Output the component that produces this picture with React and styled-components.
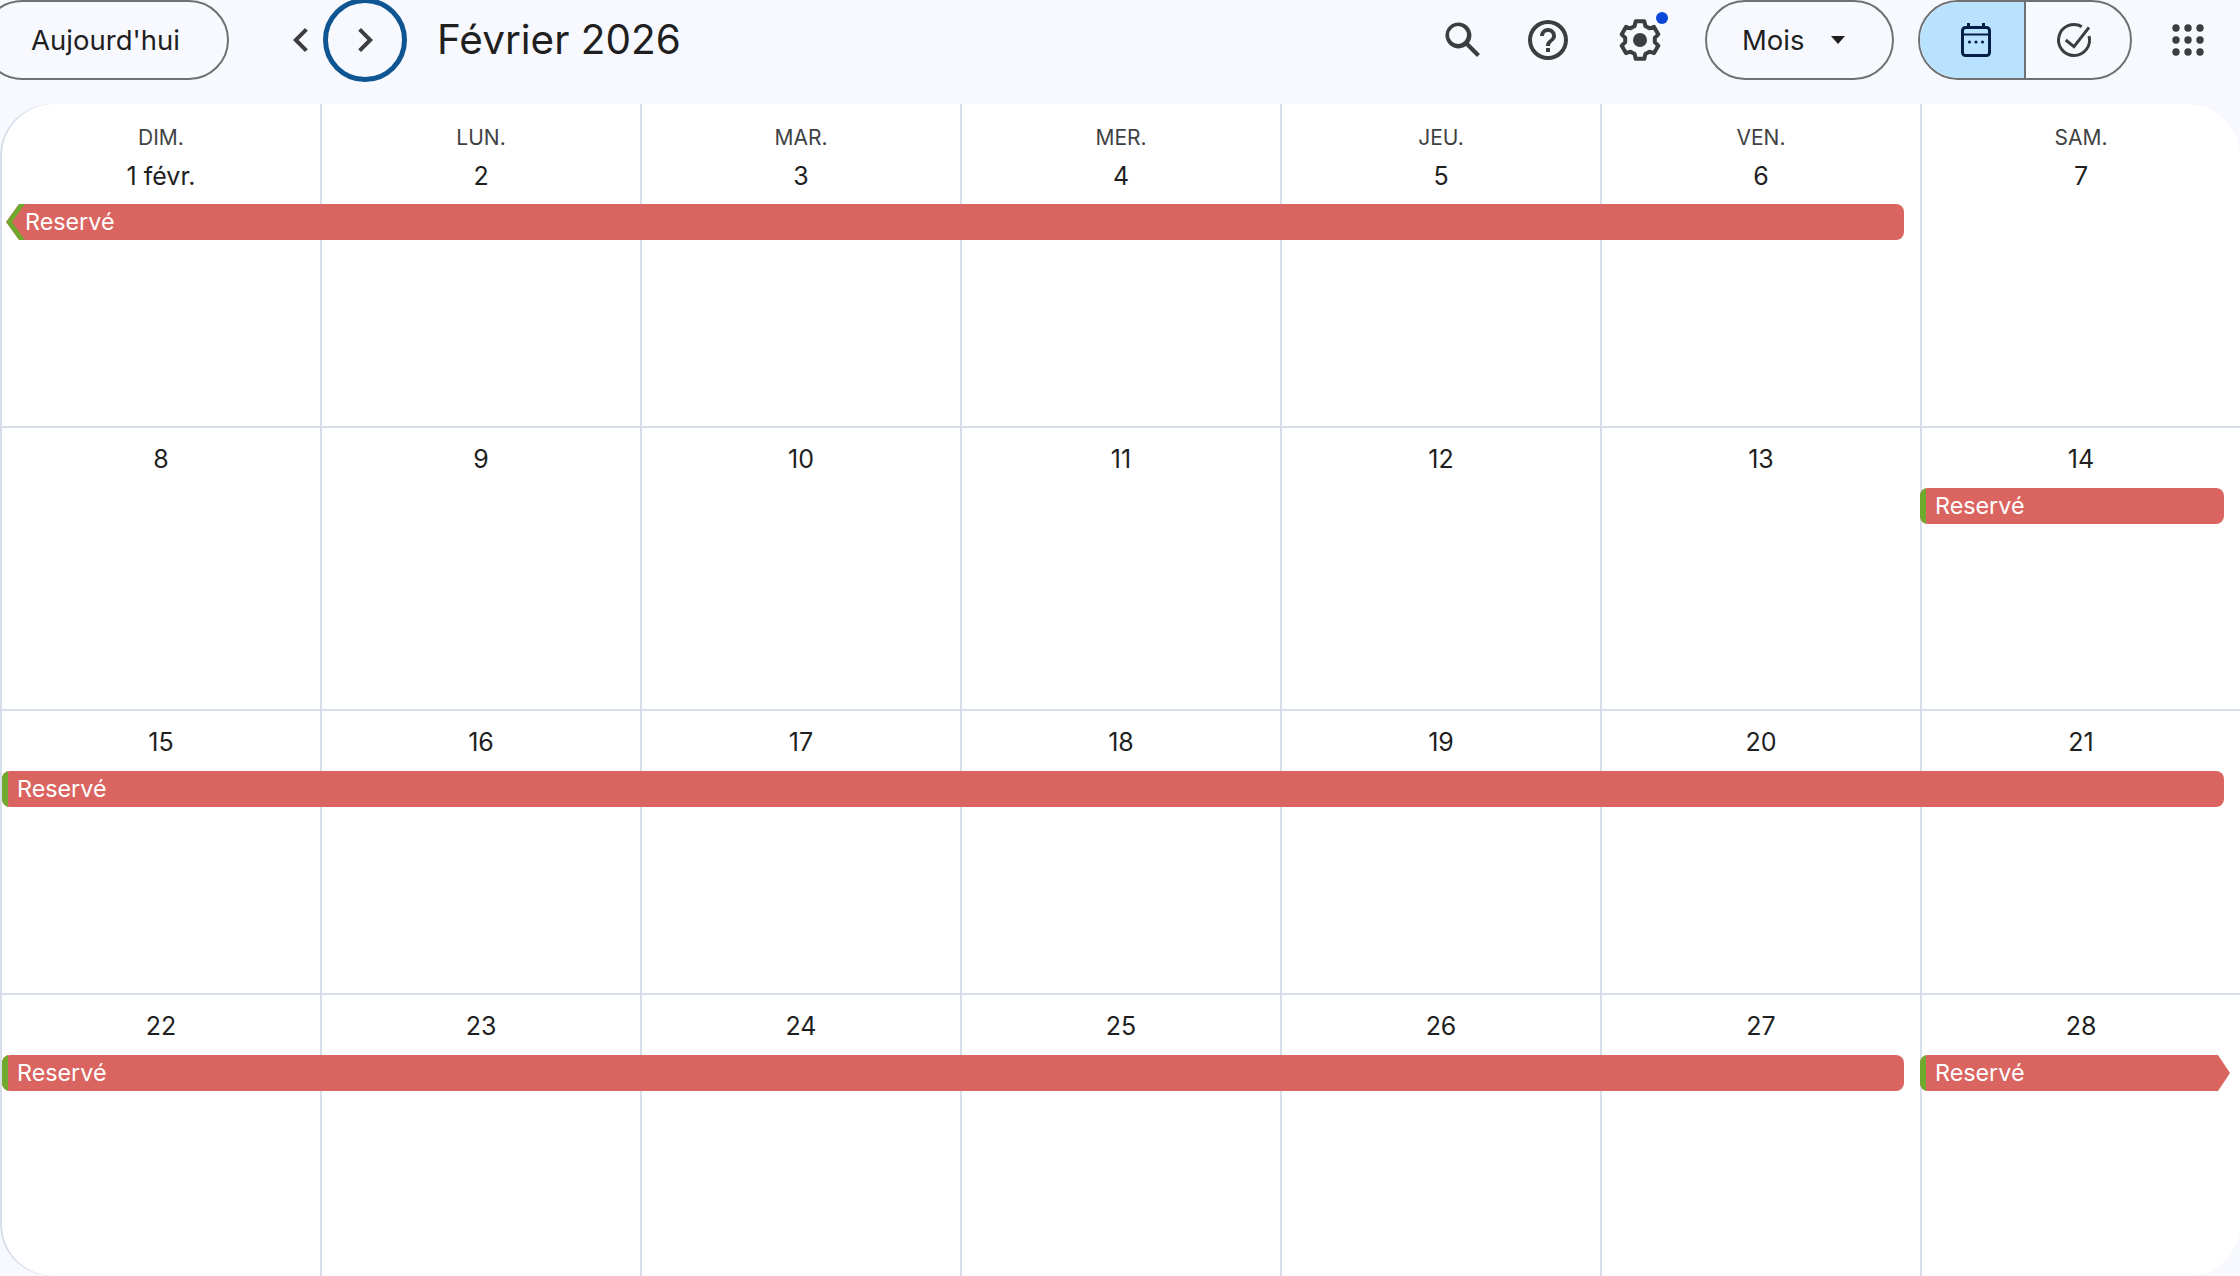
import React from "react";
import styled, { createGlobalStyle } from "styled-components";

const GlobalStyle = createGlobalStyle`
  html, body {
    margin: 0;
    padding: 0;
    background: #f7f9fe;
    overflow: hidden;
  }
  * {
    box-sizing: border-box;
  }
`;

const Page = styled.div`
  width: 2240px;
  height: 1276px;
  display: flex;
  flex-direction: column;
  overflow: hidden;
  font-family: Inter, "Liberation Sans", sans-serif;
  color: #1f1f1f;
`;

const Toolbar = styled.div`
  height: 104px;
  flex: none;
  display: flex;
  align-items: flex-start;
  padding-right: 28px;
`;

const Pill = styled.button`
  height: 80px;
  margin-left: ${(p) => p.$left || 0}px;
  width: ${(p) => p.$width}px;
  flex: none;
  border: 2px solid #6f7170;
  border-radius: 40px;
  background: transparent;
  font: inherit;
  font-size: 27.5px;
  color: #1f1f1f;
  display: flex;
  align-items: center;
  justify-content: ${(p) => p.$justify || "center"};
  padding: 0 0 0 ${(p) => p.$pad || 0}px;
`;

const Caret = styled.span`
  width: 0;
  height: 0;
  margin-left: 26px;
  border-left: 7px solid transparent;
  border-right: 7px solid transparent;
  border-top: 8px solid #1f1f1f;
`;

const NavIcon = styled.div`
  flex: none;
  width: ${(p) => p.$size || 48}px;
  height: ${(p) => p.$size || 48}px;
  margin-left: ${(p) => p.$left || 0}px;
  margin-top: ${(p) => 40 - (p.$size || 48) / 2}px;
  display: flex;
  align-items: center;
  justify-content: center;
  position: relative;
  border-radius: 50%;
  border: ${(p) => (p.$focus ? "5px solid #0f5592" : "none")};
`;

const Dot = styled.span`
  position: absolute;
  top: -4px;
  right: -4px;
  width: 12px;
  height: 12px;
  border-radius: 50%;
  background: #0b48d8;
`;

const Title = styled.div`
  margin: 13px 0 0 30px;
  width: 500px;
  flex: none;
  font-size: 40.5px;
  line-height: 54px;
  color: #1f1f1f;
`;

const Spacer = styled.div`
  flex: 1;
`;

const Toggle = styled.div`
  width: 214px;
  height: 80px;
  margin-left: 24px;
  flex: none;
  display: flex;
  border: 2px solid #6f7170;
  border-radius: 40px;
  overflow: hidden;
`;

const ToggleSide = styled.div`
  flex: none;
  width: 106px;
  display: flex;
  align-items: center;
  justify-content: center;
  padding: ${(p) => (p.$active ? "0 0 0 7px" : "0 10px 0 0")};
  background: ${(p) => (p.$active ? "#b9e2ff" : "transparent")};
  border-right: ${(p) => (p.$active ? "2px solid #6f7170" : "none")};
`;

const Sheet = styled.div`
  flex: 1;
  display: grid;
  grid-template-rows: 324px 283px 284px 1fr;
  background: #fff;
  border-radius: 52px;
  overflow: hidden;
  box-shadow: inset 2px 0 0 #d7deea;
`;

const Week = styled.div`
  display: grid;
  grid-template-columns: repeat(7, 1fr);
  grid-template-rows: ${(p) => p.$head}px 36px 1fr;
`;

const Cell = styled.div`
  grid-row: 1 / 4;
  grid-column: ${(p) => p.$col};
  display: flex;
  flex-direction: column;
  align-items: center;
  padding-top: ${(p) => (p.$first ? 21 : 15)}px;
  border-left: 2px solid ${(p) => (p.$col === 1 ? "transparent" : "#d7deea")};
  border-bottom: ${(p) => (p.$last ? "none" : "2px solid #d7deea")};
`;

const WeekDay = styled.div`
  font-size: 21px;
  line-height: 26px;
  color: #3f4243;
`;

const DayNum = styled.div`
  font-size: 25px;
  line-height: 32px;
  margin-top: ${(p) => (p.$first ? 9 : 0)}px;
  color: #1f1f1f;
`;

const Event = styled.div`
  grid-row: 2;
  grid-column: ${(p) => p.$from} / ${(p) => p.$to};
  height: 36px;
  z-index: 1;
  margin-left: ${(p) => p.$ml}px;
  margin-right: ${(p) => p.$mr}px;
  background: #da6560;
  color: #fff;
  font-size: 23.3px;
  line-height: 36px;
  padding-left: ${(p) => p.$pl}px;
  white-space: nowrap;
  overflow: hidden;
  position: relative;
  border-radius: ${(p) => (p.$startCut ? "0" : "8px")} ${(p) => (p.$endCut ? "0" : "8px")} ${(p) =>
      p.$endCut ? "0" : "8px"} ${(p) => (p.$startCut ? "0" : "8px")};
  clip-path: ${(p) =>
    p.$endCut
      ? "polygon(0 0, calc(100% - 12px) 0, 100% 50%, calc(100% - 12px) 100%, 0 100%)"
      : p.$startCut
      ? "polygon(13px 0, 100% 0, 100% 100%, 13px 100%, 0 50%)"
      : "none"};
`;

const EventStripe = styled.span`
  position: absolute;
  left: 0;
  top: 0;
  bottom: 0;
  width: 6px;
  background: #6fa92d;
`;

const EventChevron = styled.span`
  position: absolute;
  left: 0;
  top: 0;
  bottom: 0;
  width: 19px;
  background: #6fa92d;
  clip-path: polygon(13px 0, 19px 0, 6px 50%, 19px 100%, 13px 100%, 0 50%);
`;

const ICON = "#3c3d3e";

const SearchIcon = () => (
  <svg width="48" height="48" viewBox="0 0 24 24" fill={ICON}>
    <path d="M20.49 19 15 13.5A6.5 6.5 0 1 0 13.5 15l5.5 5.49zM9.5 14a4.5 4.5 0 1 1 0-9 4.5 4.5 0 0 1 0 9z" />
  </svg>
);

const HelpIcon = () => (
  <svg width="48" height="48" viewBox="0 0 24 24" fill={ICON}>
    <path
      fillRule="evenodd"
      d="M12 2a10 10 0 1 0 0 20 10 10 0 0 0 0-20zm0 18a8 8 0 1 1 0-16 8 8 0 0 1 0 16zm-1-4h2v2h-2zm1-10a4 4 0 0 0-4 4h2a2 2 0 1 1 4 0c0 2-3 1.75-3 5h2c0-2.25 3-2.5 3-5a4 4 0 0 0-4-4z"
    />
  </svg>
);

// six teeth, one pointing straight up
const gearPath = () => {
  const pts = [];
  for (let i = 0; i < 6; i++) {
    const a = -90 + i * 60;
    [
      [7.5, -21],
      [9.6, -13],
      [9.6, 13],
      [7.5, 21],
    ].forEach(([r, d]) => {
      const rad = ((a + d) * Math.PI) / 180;
      pts.push((12 + r * Math.cos(rad)).toFixed(2) + " " + (12 + r * Math.sin(rad)).toFixed(2));
    });
  }
  return "M" + pts.join("L") + "Z";
};

const GearIcon = () => (
  <svg width="48" height="48" viewBox="0 0 24 24">
    <path d={gearPath()} fill="none" stroke={ICON} strokeWidth="2" strokeLinejoin="round" />
    <circle cx="12" cy="12" r="3.5" fill={ICON} />
  </svg>
);

const ChevronIcon = ({ flip }) => (
  <svg width="48" height="48" viewBox="0 0 24 24" fill={ICON}>
    <path d={flip ? "M15.4 7.4 14 6l-6 6 6 6 1.4-1.4L10.8 12z" : "M8.6 7.4 10 6l6 6-6 6-1.4-1.4L13.2 12z"} />
  </svg>
);

const CalendarIcon = () => (
  <svg width="30" height="34" viewBox="0 2 30 34">
    <g fill="#041e49">
      <rect x="6" y="2" width="3" height="6" />
      <rect x="21" y="2" width="3" height="6" />
      <circle cx="8.5" cy="21" r="1.6" />
      <circle cx="15" cy="21" r="1.6" />
      <circle cx="21.5" cy="21" r="1.6" />
    </g>
    <rect x="1.5" y="6.5" width="27" height="28" rx="3" fill="none" stroke="#041e49" strokeWidth="3" />
    <line x1="1.5" y1="13.5" x2="28.5" y2="13.5" stroke="#041e49" strokeWidth="2.2" />
  </svg>
);

const TaskIcon = () => (
  <svg width="48" height="48" viewBox="0 1 48 48" fill="none" stroke={ICON} strokeWidth="3">
    <path d="M39 21A15.5 15.5 0 1 1 31.75 11.6" />
    <path d="M15.7 25 24 31.7 39 12.3" />
  </svg>
);

const AppsIcon = () => (
  <svg width="48" height="48" viewBox="0 0 24 24" fill={ICON}>
    {[6, 12, 18].flatMap((y) =>
      [6, 12, 18].map((x) => <circle key={x + "-" + y} cx={x} cy={y} r="1.85" />)
    )}
  </svg>
);

const weekDays = ["DIM.", "LUN.", "MAR.", "MER.", "JEU.", "VEN.", "SAM."];

const weeks = [
  {
    head: 100,
    days: ["1 févr.", 2, 3, 4, 5, 6, 7],
    events: [{ from: 1, to: 7, ml: 6, mr: 16, pl: 19, startCut: true }],
  },
  {
    head: 60,
    days: [8, 9, 10, 11, 12, 13, 14],
    events: [{ from: 7, to: 8, ml: 0, mr: 16, pl: 15 }],
  },
  {
    head: 60,
    days: [15, 16, 17, 18, 19, 20, 21],
    events: [{ from: 1, to: 8, ml: 2, mr: 16, pl: 15 }],
  },
  {
    head: 60,
    days: [22, 23, 24, 25, 26, 27, 28],
    events: [
      { from: 1, to: 7, ml: 2, mr: 16, pl: 15 },
      { from: 7, to: 8, ml: 0, mr: 10, pl: 15, endCut: true },
    ],
  },
];

export default function App() {
  return (
    <Page>
      <GlobalStyle />
      <Toolbar>
        <Pill $left={-18} $width={247} $pad={0}>
          Aujourd'hui
        </Pill>
        <NavIcon $left={48}>
          <ChevronIcon flip />
        </NavIcon>
        <NavIcon $left={-2} $size={84} $focus>
          <ChevronIcon />
        </NavIcon>
        <Title>Février 2026</Title>
        <Spacer />
        <NavIcon>
          <SearchIcon />
        </NavIcon>
        <NavIcon $left={37}>
          <HelpIcon />
        </NavIcon>
        <NavIcon $left={44}>
          <GearIcon />
          <Dot />
        </NavIcon>
        <Pill $left={41} $width={189} $justify="flex-start" $pad={35}>
          Mois
          <Caret />
        </Pill>
        <Toggle>
          <ToggleSide $active>
            <CalendarIcon />
          </ToggleSide>
          <ToggleSide>
            <TaskIcon />
          </ToggleSide>
        </Toggle>
        <NavIcon $left={32}>
          <AppsIcon />
        </NavIcon>
      </Toolbar>
      <Sheet>
        {weeks.map((week, w) => (
          <Week key={w} $head={week.head}>
            {week.days.map((day, d) => (
              <Cell key={d} $col={d + 1} $first={w === 0} $last={w === 3}>
                {w === 0 && <WeekDay>{weekDays[d]}</WeekDay>}
                <DayNum $first={w === 0}>{day}</DayNum>
              </Cell>
            ))}
            {week.events.map((ev, i) => (
              <Event
                key={i}
                $from={ev.from}
                $to={ev.to}
                $ml={ev.ml}
                $mr={ev.mr}
                $pl={ev.pl}
                $startCut={ev.startCut}
                $endCut={ev.endCut}
              >
                {ev.startCut ? <EventChevron /> : <EventStripe />}
                Reservé
              </Event>
            ))}
          </Week>
        ))}
      </Sheet>
    </Page>
  );
}
